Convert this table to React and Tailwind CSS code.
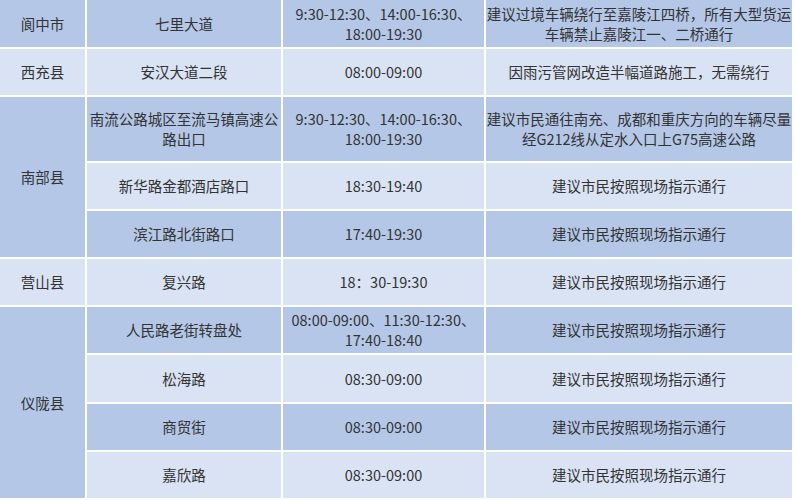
const DARK = 'bg-[#b4c7e7]';
const LIGHT = 'bg-[#dae3f3]';

const rows = [
  { county: '阆中市', span: 1, road: ['七里大道'], time: ['9:30-12:30、14:00-16:30、', '18:00-19:30'], note: ['建议过境车辆绕行至嘉陵江四桥，所有大型货运', '车辆禁止嘉陵江一、二桥通行'], h: 'h-[47px]' },
  { county: '西充县', span: 1, road: ['安汉大道二段'], time: ['08:00-09:00'], note: ['因雨污管网改造半幅道路施工，无需绕行'], h: 'h-[46px]' },
  { county: '南部县', span: 3, road: ['南流公路城区至流马镇高速公', '路出口'], time: ['9:30-12:30、14:00-16:30、', '18:00-19:30'], note: ['建议市民通往南充、成都和重庆方向的车辆尽量', '经G212线从定水入口上G75高速公路'], h: 'h-[64px]' },
  { road: ['新华路金都酒店路口'], time: ['18:30-19:40'], note: ['建议市民按照现场指示通行'], h: 'h-[46px]' },
  { road: ['滨江路北街路口'], time: ['17:40-19:30'], note: ['建议市民按照现场指示通行'], h: 'h-[46px]' },
  { county: '营山县', span: 1, road: ['复兴路'], time: ['18：30-19:30'], note: ['建议市民按照现场指示通行'], h: 'h-[46px]' },
  { county: '仪陇县', span: 4, road: ['人民路老街转盘处'], time: ['08:00-09:00、11:30-12:30、', '17:40-18:40'], note: ['建议市民按照现场指示通行'], h: 'h-[46px]' },
  { road: ['松海路'], time: ['08:30-09:00'], note: ['建议市民按照现场指示通行'], h: 'h-[47px]' },
  { road: ['商贸街'], time: ['08:30-09:00'], note: ['建议市民按照现场指示通行'], h: 'h-[46px]' },
  { road: ['嘉欣路'], time: ['08:30-09:00'], note: ['建议市民按照现场指示通行'], h: 'h-[46px]' },
];

function Lines({ items }) {
  return items.map((t, i) => (
    <div key={i} className="whitespace-nowrap">{t}</div>
  ));
}

export default function App() {
  return (
    <div className="w-[795px] h-[500px] overflow-hidden bg-white">
      <table
        className="table-fixed border-separate border-spacing-[2px] -ml-[2px] -mt-[2px] w-[796px] text-[14.5px] leading-[20px] text-[#333333] text-center"
        style={{ fontFamily: '"Noto Sans CJK SC", "Noto Sans", sans-serif' }}
      >
        <colgroup>
          <col className="w-[85px]" />
          <col className="w-[194px]" />
          <col className="w-[201px]" />
          <col className="w-[306px]" />
        </colgroup>
        <tbody>
          {rows.map((r, i) => {
            const bg = i % 2 === 0 ? DARK : LIGHT;
            return (
              <tr key={i} className={r.h}>
                {r.county && (
                  <td rowSpan={r.span} className={`${r.span > 1 ? DARK : bg} p-0 align-middle`}>
                    {r.county}
                  </td>
                )}
                <td className={`${bg} p-0 align-middle`}>
                  <Lines items={r.road} />
                </td>
                <td className={`${bg} p-0 align-middle`}>
                  <Lines items={r.time} />
                </td>
                <td className={`${bg} p-0 align-middle`}>
                  <Lines items={r.note} />
                </td>
              </tr>
            );
          })}
        </tbody>
      </table>
    </div>
  );
}
